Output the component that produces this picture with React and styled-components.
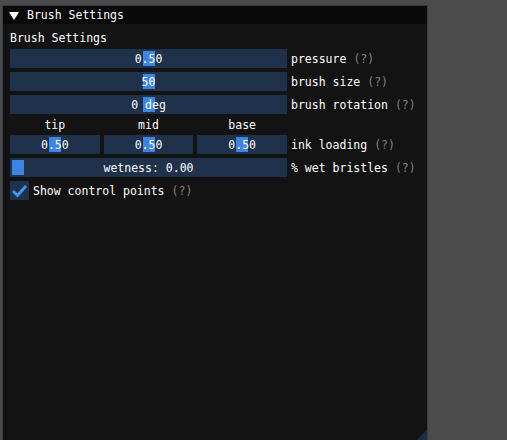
import React from "react";
import styled, { createGlobalStyle } from "styled-components";

const GlobalStyle = createGlobalStyle`
    html, body {
        margin: 0;
        padding: 0;
        background: #4b4b4b;
        height: 100%;
        overflow: hidden;
    }
    body {
        font-family: "DejaVu Sans Mono", "Liberation Mono", monospace;
        font-size: 11.5px;
        line-height: 13px;
        color: #ffffff;
    }
`

const Page = styled.div`
    padding: 5px 0 0 2px;
`

const Window = styled.div`
    position: relative;
    width: 424px;
    height: 434px;
    background: #131313;
    border: 1px solid #3b3b45;
    display: flex;
    flex-direction: column;
`

const TitleBar = styled.div`
    height: 18px;
    background: #0a0a0a;
    display: flex;
    align-items: center;
    padding-left: 6px;
    gap: 8px;
`

const Arrow = styled.span`
    width: 0;
    height: 0;
    border-left: 5px solid transparent;
    border-right: 5px solid transparent;
    border-top: 8px solid #ffffff;
    margin-top: 1px;
`

const Content = styled.div`
    padding: 8px 7px;
    display: flex;
    flex-direction: column;
    gap: 4px;
`

const Text = styled.div`
    height: 13px;
    white-space: pre;
`

const Row = styled.div`
    display: flex;
    align-items: ${p => p.$bottom ? "flex-end" : "center"};
    gap: 4px;
`

const Group = styled.div`
    width: 277px;
    display: flex;
    gap: 4px;
`

const Column = styled.div`
    flex: 1;
    display: flex;
    flex-direction: column;
    gap: 4px;
`

const Header = styled.div`
    box-sizing: border-box;
    height: 13px;
    text-align: center;
    padding-top: 1px;
`

const Frame = styled.div`
    position: relative;
    width: ${p => p.$w || "277px"};
    height: 19px;
    background: #1f314b;
`

const Grab = styled.div`
    position: absolute;
    top: 2px;
    bottom: 2px;
    width: 12px;
    background: #3d85e0;
`

const Value = styled.div`
    position: absolute;
    inset: 0;
    padding-top: 1px;
    display: flex;
    align-items: center;
    justify-content: center;
    white-space: pre;
    z-index: 1;
`

const Label = styled.div`
    white-space: pre;
    height: 19px;
    display: flex;
    align-items: center;
    padding-top: 1px;
    box-sizing: border-box;
`

const Help = styled.span`
    color: #808080;
    margin-left: 7px;
`

const Check = styled.div`
    width: 19px;
    height: 19px;
    background: #1f314b;
    display: flex;
    align-items: center;
    justify-content: center;
`

const Grip = styled.div`
    position: absolute;
    right: 0;
    bottom: 0;
    width: 0;
    height: 0;
    border-left: 10px solid transparent;
    border-bottom: 10px solid #1d2f47;
`

const Slider = ({ text, pos = 0.5, width }) => (
    <Frame $w={width}>
        <Grab style={{ left: `calc(2px + (100% - 16px) * ${pos})` }} />
        <Value>{text}</Value>
    </Frame>
)

const Caption = ({ name }) => (
    <Label>{name}<Help>(?)</Help></Label>
)

export default function App() {
    return (
        <Page>
            <GlobalStyle />
            <Window>
                <TitleBar>
                    <Arrow />
                    <span>Brush Settings</span>
                </TitleBar>
                <Content>
                    <Text>Brush Settings</Text>
                    <Row>
                        <Slider text="0.50" />
                        <Caption name="pressure" />
                    </Row>
                    <Row>
                        <Slider text="50" />
                        <Caption name="brush size" />
                    </Row>
                    <Row>
                        <Slider text="0 deg" />
                        <Caption name="brush rotation" />
                    </Row>
                    <Row $bottom>
                        <Group>
                            {["tip", "mid", "base"].map(h => (
                                <Column key={h}>
                                    <Header>{h}</Header>
                                    <Slider text="0.50" width="auto" />
                                </Column>
                            ))}
                        </Group>
                        <Caption name="ink loading" />
                    </Row>
                    <Row>
                        <Slider text="wetness: 0.00" pos={0} />
                        <Caption name="% wet bristles" />
                    </Row>
                    <Row>
                        <Check>
                            <svg width="19" height="19" viewBox="0 0 19 19">
                                <path d="M3 10 L7.5 14.5 L16 5" fill="none" stroke="#4296fa" strokeWidth="2.8" />
                            </svg>
                        </Check>
                        <Caption name="Show control points" />
                    </Row>
                </Content>
                <Grip />
            </Window>
        </Page>
    );
}
